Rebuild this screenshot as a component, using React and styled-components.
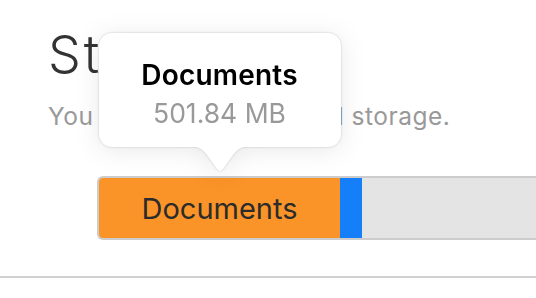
import React from "react";
import styled, { createGlobalStyle } from "styled-components";

const GlobalStyle = createGlobalStyle`
  html, body {
    margin: 0;
    padding: 0;
    background: #fff;
    overflow: hidden;
  }
  body {
    font-family: Inter, "Liberation Sans", sans-serif;
  }
`;

const Page = styled.div`
  width: 536px;
  height: 298px;
  display: flex;
  flex-direction: column;
`;

const Header = styled.div`
  padding: 25px 0 0 48px;
  display: flex;
  flex-direction: column;
`;

const Title = styled.h1`
  margin: 0;
  font-size: 52px;
  font-weight: 300;
  line-height: 60px;
  letter-spacing: 3px;
  color: #333;
`;

const Subtitle = styled.p`
  margin: 15px 0 0;
  font-size: 24.5px;
  line-height: 32px;
  letter-spacing: 0.5px;
  color: #999;
`;

const BarRow = styled.div`
  padding: 44px 0 0 97px;
`;

const Bar = styled.div`
  width: 520px;
  height: 60px;
  display: flex;
  border: 2px solid #cccccc;
  border-right: none;
  border-radius: 6px 0 0 6px;
  background: #e4e4e4;
`;

const Segment = styled.div`
  position: relative;
  flex: 0 0 ${(p) => p.$width}px;
  background: ${(p) => p.$color};
  display: flex;
  align-items: center;
  justify-content: center;
  font-size: 29px;
  color: #2b2b2b;
  &:first-child {
    border-radius: 4px 0 0 4px;
  }
`;

const Tooltip = styled.div`
  position: absolute;
  left: 50%;
  bottom: calc(100% + 5px);
  transform: translateX(-50%);
  display: flex;
  flex-direction: column;
  align-items: center;
  filter: drop-shadow(0 0 1px rgba(0, 0, 0, 0.2))
    drop-shadow(0 3px 12px rgba(0, 0, 0, 0.09));
`;

const TipBox = styled.div`
  width: 242px;
  height: 114px;
  box-sizing: border-box;
  padding-top: 24px;
  background: #fff;
  border-radius: 13px;
  display: flex;
  flex-direction: column;
  align-items: center;
`;

const TipTitle = styled.div`
  font-size: 28px;
  font-weight: 600;
  line-height: 36px;
  letter-spacing: 0.2px;
  color: #000;
`;

const TipValue = styled.div`
  margin-top: 2px;
  font-size: 26.5px;
  line-height: 36px;
  color: #999;
`;

const Arrow = styled.svg`
  display: block;
  margin-top: -1px;
`;

const Divider = styled.div`
  margin-top: auto;
  margin-bottom: 20px;
  height: 2px;
  background: #d0d0d0;
`;

const segments = [
  { name: "Documents", size: "501.84 MB", color: "#fa9428", width: 241 },
  { name: "", color: "#157ff9", width: 22 },
];

export default function App() {
  return (
    <Page>
      <GlobalStyle />
      <Header>
        <Title>Storage</Title>
        <Subtitle>You have used 1GB of all storage.</Subtitle>
      </Header>
      <BarRow>
        <Bar>
          {segments.map((s, i) => (
            <Segment key={i} $width={s.width} $color={s.color}>
              {s.name}
              {i === 0 && (
                <Tooltip>
                  <TipBox>
                    <TipTitle>{s.name}</TipTitle>
                    <TipValue>{s.size}</TipValue>
                  </TipBox>
                  <Arrow width="64" height="27" viewBox="0 0 64 27">
                    <path
                      d="M0 0 C10 0 14 3 19 9 L29 23 Q32 27 35 23 L45 9 C50 3 54 0 64 0 Z"
                      fill="#fff"
                    />
                  </Arrow>
                </Tooltip>
              )}
            </Segment>
          ))}
        </Bar>
      </BarRow>
      <Divider />
    </Page>
  );
}
